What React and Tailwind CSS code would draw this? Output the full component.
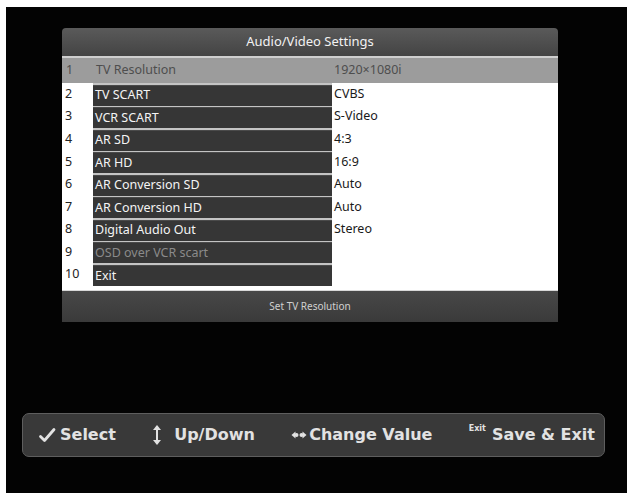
import React from 'react';

const rows = [
  { n: '2', label: 'TV SCART', value: 'CVBS' },
  { n: '3', label: 'VCR SCART', value: 'S-Video' },
  { n: '4', label: 'AR SD', value: '4:3' },
  { n: '5', label: 'AR HD', value: '16:9' },
  { n: '6', label: 'AR Conversion SD', value: 'Auto' },
  { n: '7', label: 'AR Conversion HD', value: 'Auto' },
  { n: '8', label: 'Digital Audio Out', value: 'Stereo' },
  { n: '9', label: 'OSD over VCR scart', value: '', dim: true },
  { n: '10', label: 'Exit', value: '' },
];

function CheckIcon() {
  return (
    <svg width="18" height="16" viewBox="0 0 18 16" className="mr-[4px]">
      <path d="M2.5 9.5 L6.5 13.5 L16 2.5" fill="none" stroke="#e2e2e2" strokeWidth="2.8" strokeLinecap="round" strokeLinejoin="round" />
    </svg>
  );
}

function UpDownIcon() {
  return (
    <svg width="10" height="22" viewBox="0 0 10 22" className="mr-[12px]">
      <path d="M5 1 L9 6 L1 6 Z" fill="#e2e2e2" />
      <rect x="4" y="6" width="2" height="10" fill="#e2e2e2" />
      <path d="M5 21 L9 16 L1 16 Z" fill="#e2e2e2" />
    </svg>
  );
}

function LeftRightIcon() {
  return (
    <svg width="16" height="12" viewBox="0 0 16 12" className="mr-[2px]">
      <path d="M0.5 6 L4.5 2.5 L4.5 9.5 Z" fill="#e2e2e2" />
      <circle cx="5.5" cy="6" r="2" fill="#e2e2e2" />
      <path d="M15.5 6 L11.5 2.5 L11.5 9.5 Z" fill="#e2e2e2" />
      <circle cx="10.5" cy="6" r="2" fill="#e2e2e2" />
    </svg>
  );
}

export default function App() {
  return (
    <div className="w-[631px] h-[496px] bg-white pt-[7px] pl-[6px]" style={{ fontFamily: '"Noto Sans", "DejaVu Sans", sans-serif' }}>
      <div className="w-[621px] h-[486px] bg-[#030303] flex flex-col overflow-hidden">
        {/* settings panel */}
        <div className="mt-[21px] ml-[56px] w-[496px] flex flex-col rounded-t-[4px] overflow-hidden">
          <div className="h-[28px] bg-gradient-to-b from-[#5a5a5a] to-[#444444] flex items-center justify-center text-[13px] text-[#f2f2f2]">
            Audio/Video Settings
          </div>
          <div className="h-[27px] bg-[#9c9c9c] border-t-[2px] border-[#cfcfcf] flex items-center text-[12.5px] text-[#4e4e4e]">
            <div className="w-[31px] pl-[4px]">1</div>
            <div className="w-[239px] pl-[3px]">TV Resolution</div>
            <div className="pl-[2px]">1920×1080i</div>
          </div>
          <div className="bg-white flex flex-col pb-[4px]">
            {rows.map((r) => (
              <div key={r.n} className="h-[22.55px] flex items-stretch">
                <div className="w-[31px] pl-[3px] flex items-center text-[12.5px] text-[#222]">{r.n}</div>
                <div className="w-[239px] bg-[#c4c4c4] pt-[1.5px]">
                  <div className={`h-full bg-[#363636] border-t border-[#4a4a4a] pl-[2px] flex items-center text-[12.5px] ${r.dim ? 'text-[#8a8a8a]' : 'text-[#f4f4f4]'}`}>
                    {r.label}
                  </div>
                </div>
                <div className="flex-1 pl-[2px] flex items-center text-[12.5px] text-[#1a1a1a]">{r.value}</div>
              </div>
            ))}
          </div>
          <div className="h-[32px] bg-gradient-to-b from-[#484848] to-[#3a3a3a] border-t border-[#d8d8d8] flex items-center justify-center text-[10px] text-[#d0d0d0]">
            Set TV Resolution
          </div>
        </div>

        {/* key help bar */}
        <div
          className="mt-[91px] ml-[16px] w-[583px] h-[44px] rounded-[7px] bg-[#393939] border border-[#5e5e5e] flex items-center justify-between pl-[15px] pr-[9px] text-[16px] font-bold text-[#e2e2e2]"
          style={{ fontFamily: '"DejaVu Sans", sans-serif' }}
        >
          <div className="flex items-center">
            <CheckIcon />
            <span>Select</span>
          </div>
          <div className="flex items-center">
            <UpDownIcon />
            <span>Up/Down</span>
          </div>
          <div className="flex items-center">
            <LeftRightIcon />
            <span>Change Value</span>
          </div>
          <div className="flex items-center">
            <span className="text-[8px] relative -top-[6px] mr-[6px]">Exit</span>
            <span>Save &amp; Exit</span>
          </div>
        </div>
      </div>
    </div>
  );
}
